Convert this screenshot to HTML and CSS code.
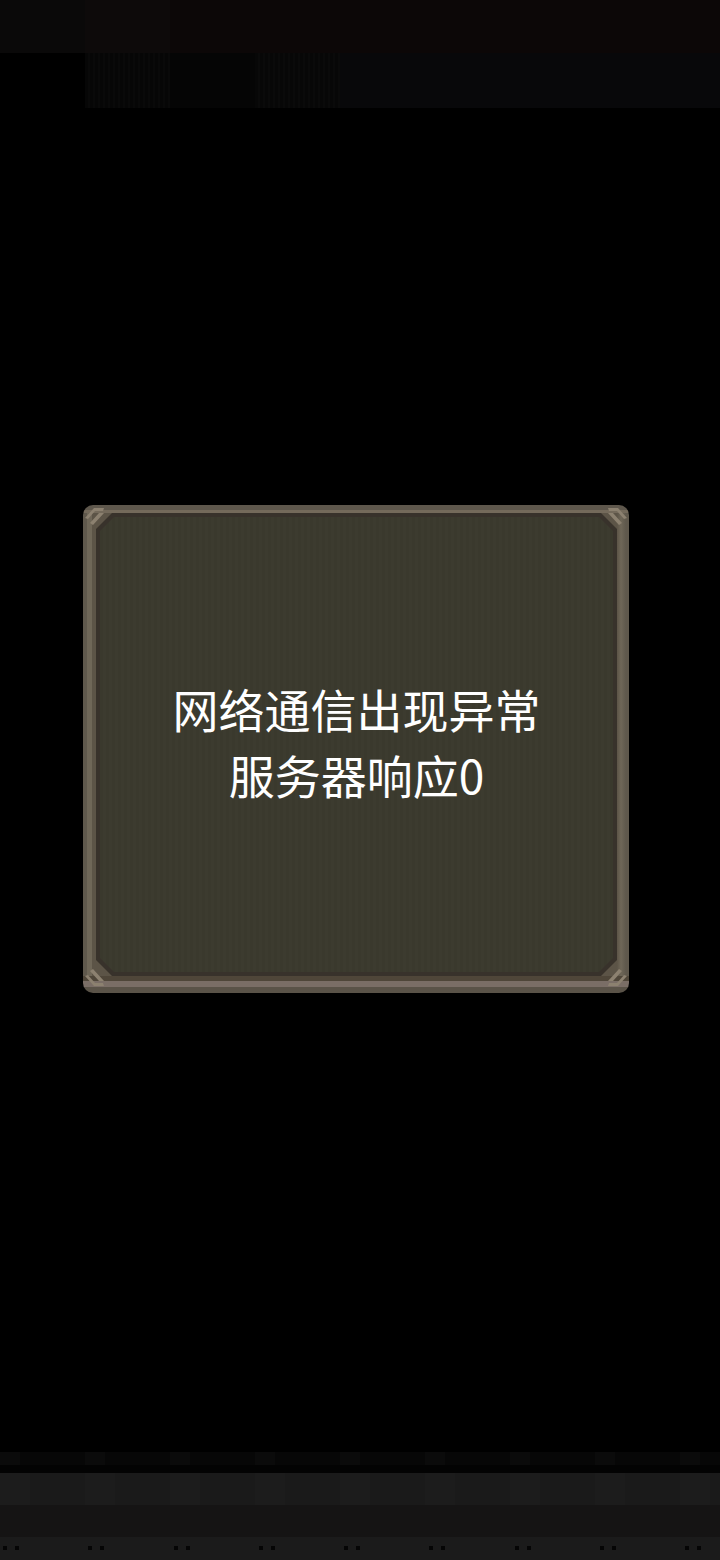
FILE: index.html
```html
<!DOCTYPE html>
<html lang="zh-CN">
<head>
<meta charset="utf-8">
<title>网络通信出现异常</title>
<link rel="stylesheet" href="styles.css">
</head>
<body>
<div class="screen">
  <div class="top-a">
    <div class="seg seg-a1"></div>
    <div class="seg seg-a2"></div>
    <div class="seg seg-a3"></div>
  </div>
  <div class="top-b">
    <div class="seg seg-b1"></div>
    <div class="seg seg-b2"></div>
    <div class="seg seg-b3"></div>
    <div class="seg seg-b4"></div>
    <div class="seg seg-b5"></div>
  </div>
  <main class="main">
    <div class="frame">
      <div class="rim">
        <div class="board">
          <p class="msg">网络通信出现异常<br>服务器响应0</p>
        </div>
      </div>
      <svg class="orn orn-tl" viewBox="0 0 26 26" width="26" height="26"><path d="M2 13 L11 3 L21 3 L20 6 L12 6 L5 14 Z M7 18 L16 8 L21 8 L10 20 Z" fill="#8c8170"/></svg>
      <svg class="orn orn-tr" viewBox="0 0 26 26" width="26" height="26"><path d="M2 13 L11 3 L21 3 L20 6 L12 6 L5 14 Z M7 18 L16 8 L21 8 L10 20 Z" fill="#8c8170"/></svg>
      <svg class="orn orn-bl" viewBox="0 0 26 26" width="26" height="26"><path d="M2 13 L11 3 L21 3 L20 6 L12 6 L5 14 Z M7 18 L16 8 L21 8 L10 20 Z" fill="#8c8170"/></svg>
      <svg class="orn orn-br" viewBox="0 0 26 26" width="26" height="26"><path d="M2 13 L11 3 L21 3 L20 6 L12 6 L5 14 Z M7 18 L16 8 L21 8 L10 20 Z" fill="#8c8170"/></svg>
    </div>
  </main>
  <div class="bottom">
    <div class="b-row b-pattern"></div>
    <div class="b-row b-gap"></div>
    <div class="b-row b-light"></div>
    <div class="b-row b-dark"></div>
    <div class="b-row b-dots">
      <div class="cell"><i></i><i></i></div>
      <div class="cell"><i></i><i></i></div>
      <div class="cell"><i></i><i></i></div>
      <div class="cell"><i></i><i></i></div>
      <div class="cell"><i></i><i></i></div>
      <div class="cell"><i></i><i></i></div>
      <div class="cell"><i></i><i></i></div>
      <div class="cell"><i></i><i></i></div>
      <div class="cell"><i></i><i></i></div>
    </div>
  </div>
</div>
</body>
</html>
```

FILE: styles.css
```css
* { box-sizing: border-box; }
html, body { margin: 0; padding: 0; background: #000; }
body { font-family: "Noto Sans CJK SC", "Noto Sans", sans-serif; }

.screen {
  width: 720px;
  height: 1560px;
  display: flex;
  flex-direction: column;
  background: #000;
  overflow: hidden;
}

.top-a { height: 53px; display: flex; }
.top-b { height: 55px; display: flex; }
.seg { height: 100%; }
.seg-a1 { width: 85px; background: #0a0909; }
.seg-a2 { width: 85px; background: #0d0a0a; }
.seg-a3 { flex: 1; background: #0c0707; }
.seg-b1 { width: 85px; background: #000; }
.seg-b2 { width: 85px; background: repeating-linear-gradient(90deg, #060606 0 3px, #090909 3px 5px); }
.seg-b3 { width: 85px; background: #050505; }
.seg-b4 { width: 85px; background: repeating-linear-gradient(90deg, #070707 0 3px, #0a0a0a 3px 5px); }
.seg-b5 { flex: 1; background: #08080a; }

.main {
  flex: 1;
  padding-top: 397px;
  padding-left: 83px;
}

.frame {
  position: relative;
  width: 546px;
  height: 488px;
  border-radius: 10px;
  padding: 8px 12px 17px 13px;
  background:
    linear-gradient(180deg, #5e574c 0 5px, #746a5b 5px 8px, transparent 8px),
    linear-gradient(0deg, #5a5348 0 6px, #7a6e66 6px 12px, #4f4639 12px 17px, transparent 17px),
    linear-gradient(90deg, #5f584c 0 4px, #6f6758 4px 9px, #5c5447 9px 13px, #5c5447 calc(100% - 12px), #6f6758 calc(100% - 8px), #5f584c calc(100% - 3px));
}

.rim {
  width: 100%;
  height: 100%;
  padding: 4px;
  background: #38322b;
  clip-path: polygon(16px 0, calc(100% - 16px) 0, 100% 16px, 100% calc(100% - 16px), calc(100% - 16px) 100%, 16px 100%, 0 calc(100% - 16px), 0 16px);
}

.board {
  width: 100%;
  height: 100%;
  display: flex;
  align-items: center;
  justify-content: center;
  padding-bottom: 8px;
  background: repeating-linear-gradient(90deg, #3a392d 0 3px, #3c3b2f 3px 6px);
  clip-path: polygon(14px 0, calc(100% - 14px) 0, 100% 14px, 100% calc(100% - 14px), calc(100% - 14px) 100%, 14px 100%, 0 calc(100% - 14px), 0 14px);
}

.msg {
  margin: 0;
  color: #fff;
  font-size: 46px;
  line-height: 66px;
  text-align: center;
  font-weight: 400;
}

.orn { position: absolute; }
.orn-tl { left: 0; top: 0; }
.orn-tr { right: 0; top: 0; transform: scaleX(-1); }
.orn-bl { left: 0; bottom: 4px; transform: scaleY(-1); }
.orn-br { right: 0; bottom: 4px; transform: scale(-1, -1); }

.bottom { height: 108px; display: flex; flex-direction: column; }
.b-row { width: 100%; }
.b-pattern { height: 13px; background: repeating-linear-gradient(90deg, #0b0b0b 0 20px, #070707 20px 85px); }
.b-gap { height: 8px; background: #030303; }
.b-light { height: 32px; background: repeating-linear-gradient(90deg, #1c1c1c 0 30px, #1a1a1a 30px 85px); }
.b-dark { height: 32px; background: #151414; }
.b-dots { height: 23px; background: #1b1b1b; display: flex; padding-top: 9px; }
.cell { width: 85.3px; flex: none; display: flex; gap: 8px; padding-left: 3px; }
.cell i { display: block; width: 4px; height: 4px; background: #050505; }
```
